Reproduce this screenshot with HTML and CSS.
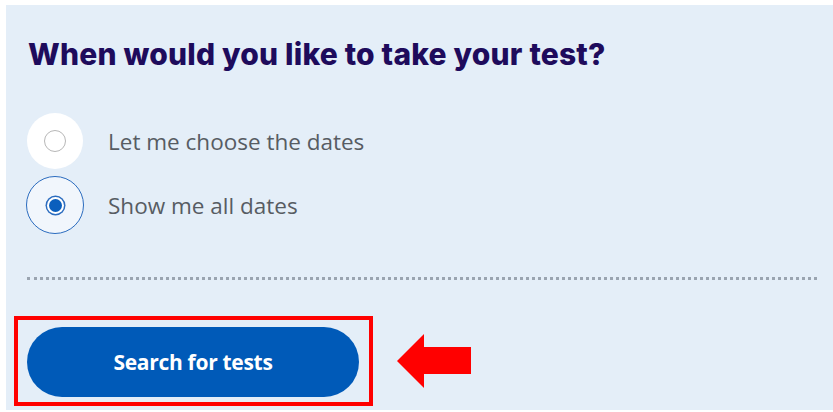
FILE: index.html
```html
<!DOCTYPE html>
<html lang="en">
<head>
<meta charset="utf-8">
<title>When would you like to take your test?</title>
<link rel="stylesheet" href="styles.css">
</head>
<body>
<div class="panel">
  <h2 class="title">When would you like to take your test?</h2>
  <div class="options">
    <label class="option">
      <span class="radio-bg"><span class="radio"></span></span>
      <span class="label">Let me choose the dates</span>
    </label>
    <label class="option selected">
      <span class="radio-bg"><span class="radio"></span></span>
      <span class="label">Show me all dates</span>
    </label>
  </div>
  <div class="divider"></div>
  <div class="actions">
    <div class="highlight">
      <button class="btn" type="button">Search for tests</button>
    </div>
    <svg class="arrow" width="74" height="54" viewBox="0 0 74 54" aria-hidden="true">
      <polygon points="0,27 27,0 27,13 74,13 74,40 27,40 27,54" fill="#ff0000"/>
    </svg>
  </div>
</div>
</body>
</html>
```

FILE: styles.css
```css
html, body {
  margin: 0;
  padding: 0;
  background: #ffffff;
}

.panel {
  margin: 5px 0 0 6px;
  height: 405px;
  box-sizing: border-box;
  background: #e4eef8;
  padding: 31px 16px 0 21px;
  display: flex;
  flex-direction: column;
}

.title {
  margin: 0 0 0 1px;
  font-family: "Inter", "Open Sans", sans-serif;
  font-weight: 800;
  font-size: 30px;
  line-height: 36px;
  letter-spacing: 0.2px;
  color: #1e0b5c;
}

.options {
  margin-top: 37px;
  display: flex;
  flex-direction: column;
}

.option {
  height: 64px;
  display: flex;
  align-items: center;
  gap: 25px;
}

.radio-bg {
  width: 56px;
  height: 56px;
  border-radius: 50%;
  background: #ffffff;
  box-sizing: border-box;
  display: flex;
  align-items: center;
  justify-content: center;
}

.radio {
  width: 22px;
  height: 22px;
  box-sizing: border-box;
  border-radius: 50%;
  border: 1.5px solid #b7b7b7;
}

.selected .radio-bg {
  width: 58px;
  height: 58px;
  background: #f1f6fc;
  border: 1.5px solid #2b6cbf;
  margin-left: -1px;
}

.selected .radio {
  width: 13px;
  height: 13px;
  border: none;
  background: #0b5fbd;
  box-shadow: 0 0 0 2px #ffffff, 0 0 0 3.5px #2b6cbf;
}

.selected .label {
  margin-left: -1px;
}

.label {
  font-family: "Open Sans", sans-serif;
  font-size: 22.5px;
  color: #575c63;
}

.divider {
  margin-top: 40px;
  border-top: 3px dotted #9aa4b0;
}

.actions {
  margin-top: 36px;
  margin-left: -13px;
  display: flex;
  align-items: center;
  gap: 24px;
}

.highlight {
  border: 4px solid #ff0000;
  padding: 7px 10px 5px 9px;
}

.btn {
  display: block;
  width: 332px;
  height: 70px;
  border: none;
  border-radius: 35px;
  background: #005ab8;
  color: #ffffff;
  font-family: "Open Sans", sans-serif;
  font-weight: 700;
  font-size: 21px;
  letter-spacing: -0.3px;
  padding: 0;
}

.arrow {
  display: block;
}
```
